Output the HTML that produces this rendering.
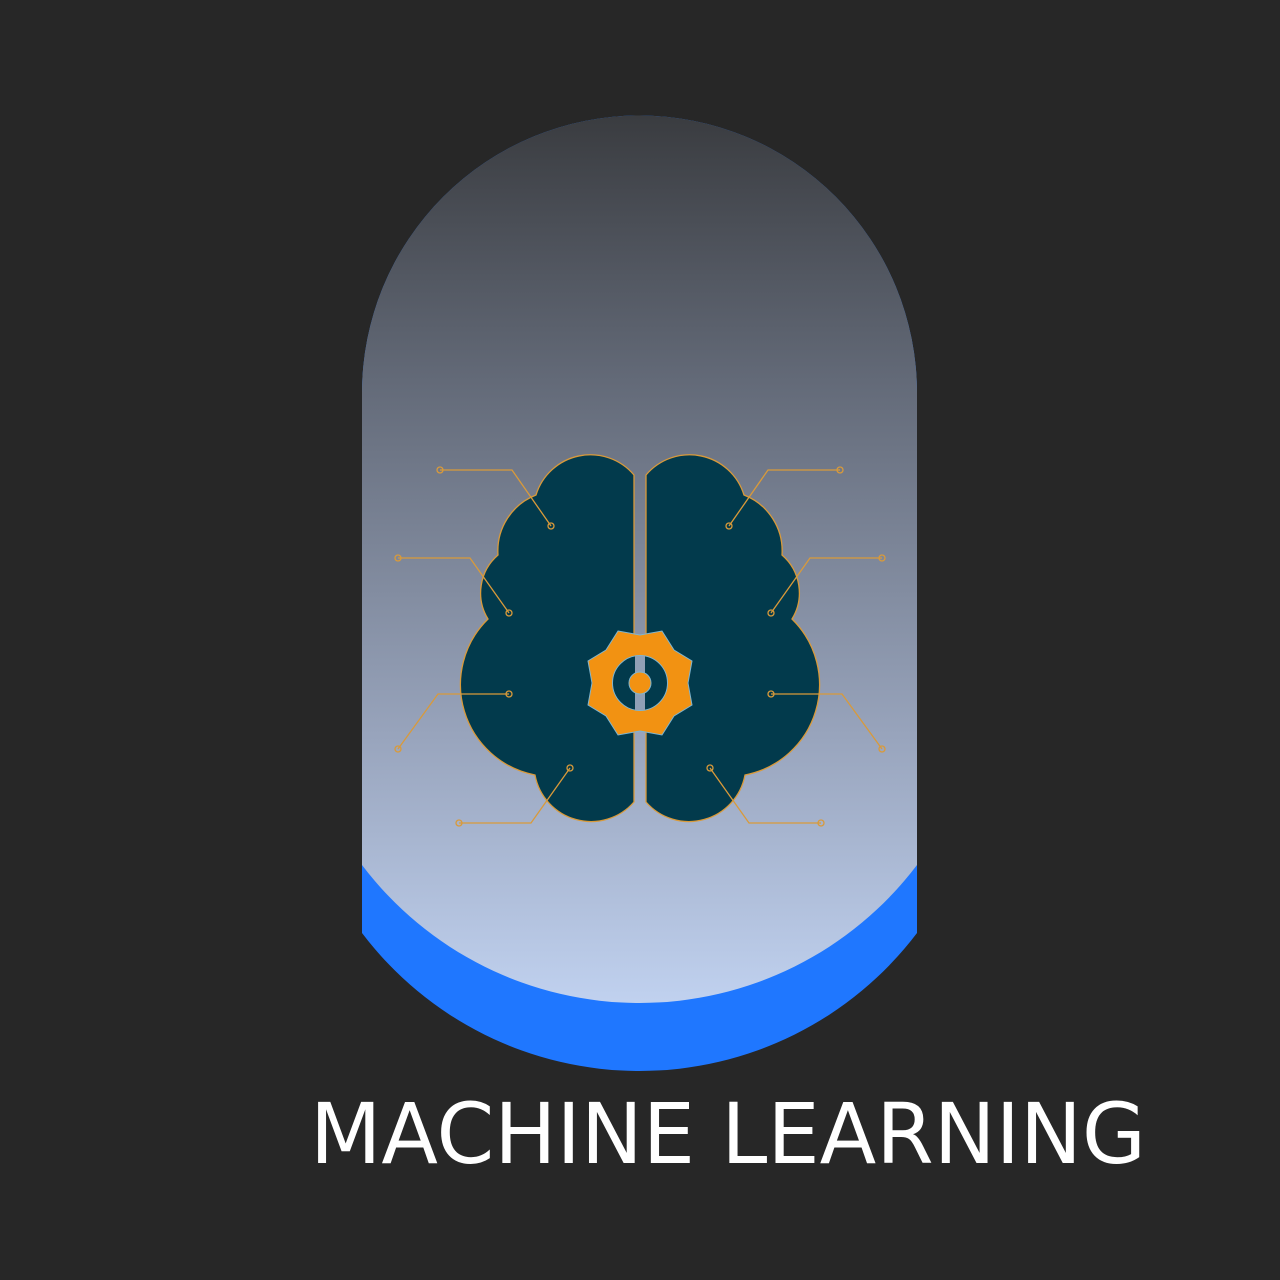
<!DOCTYPE html>
<html><head><style>html,body{margin:0;padding:0;background:#272727;}svg{display:block}</style></head>
<body>
<svg width="1280" height="1280" viewBox="0 0 1280 1280" xmlns="http://www.w3.org/2000/svg">
<defs>
<linearGradient id="g" x1="0" y1="116" x2="0" y2="1001" gradientUnits="userSpaceOnUse">
<stop offset="0" stop-color="#3a3c40"/>
<stop offset="0.3" stop-color="#636a78"/>
<stop offset="0.7" stop-color="#98a4bc"/>
<stop offset="1" stop-color="#c0d1ef"/>
</linearGradient>
</defs>
<rect width="1280" height="1280" fill="#272727"/>
<path d="M362,393 A277.5,277.5 0 0 1 917,393 L917,933 A348,348 0 0 1 362,933 Z" fill="#1f77ff"/>
<path d="M362,393 A277.5,277.5 0 0 1 917,393 L917,865 A348,348 0 0 1 362,865 Z" fill="url(#g)"/>
<g id="L" stroke="#d99a3a" stroke-width="1.3" fill="none">
<path d="M634,802 L634,475 A57,57 0 0 0 536,495 A60,60 0 0 0 498,555 A50,50 0 0 0 488,619 A92,92 0 0 0 535,775 A57,57 0 0 0 634,802 Z" fill="#023a4c"/>
<polyline points="440,470 512,470 551,526"/>
<polyline points="398,558 470,558 509,613"/>
<polyline points="509,694 438,694 398,749"/>
<polyline points="570,768 531,823 459,823"/>
<circle cx="440" cy="470" r="3"/><circle cx="551" cy="526" r="3"/>
<circle cx="398" cy="558" r="3"/><circle cx="509" cy="613" r="3"/>
<circle cx="509" cy="694" r="3"/><circle cx="398" cy="749" r="3"/>
<circle cx="570" cy="768" r="3"/><circle cx="459" cy="823" r="3"/>
</g>
<use href="#L" transform="translate(1280,0) scale(-1,1)"/>
<path d="M618,631 L640,635 L662,631 L674,650 L692,661 L688,683 L692,705 L674,716 L662,735 L640,731 L618,735 L606,716 L588,705 L592,683 L588,661 L606,650 Z" fill="#f29212" stroke="#7fb5cf" stroke-width="1"/>
<circle cx="640" cy="683" r="27.5" fill="#023a4c" stroke="#7fb5cf" stroke-width="1"/>
<rect x="635" y="656" width="10" height="54" fill="#8fa0b6"/>
<circle cx="640" cy="683" r="11" fill="#f29212" stroke="#7fb5cf" stroke-width="1"/>
<text x="310" y="1163" font-family="DejaVu Sans, Liberation Sans, sans-serif" font-size="84" fill="#ffffff" textLength="836" lengthAdjust="spacingAndGlyphs">MACHINE LEARNING</text>
</svg>
</body></html>
